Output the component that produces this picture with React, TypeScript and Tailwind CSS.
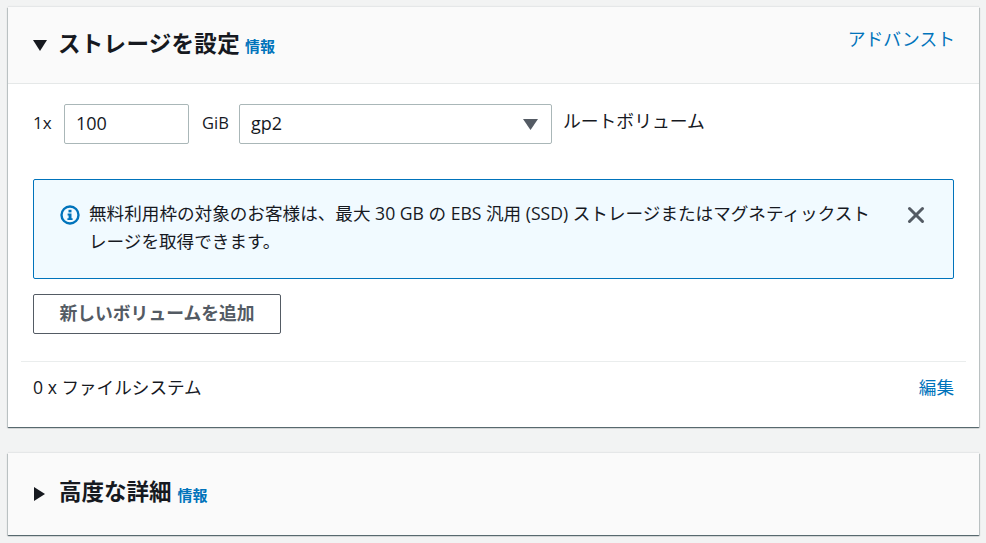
import { X } from "lucide-react"

const font = "font-['Open_Sans','Noto_Sans_CJK_JP',sans-serif]"

const App = () => {
  return (
    <div className={`h-[543px] w-[986px] overflow-hidden bg-[#f2f3f3] px-2 pt-[7px] text-[#16191f] ${font}`}>
      <section className="w-[971px] bg-white shadow-[0_1px_1px_0_rgba(0,28,36,0.5),1px_1px_1px_0_rgba(0,28,36,0.15),-1px_1px_1px_0_rgba(0,28,36,0.15),0_-1px_1px_0_rgba(0,28,36,0.05)]">
        <header className="flex h-[77px] justify-between border-b border-[#e5e8e8] bg-[#fafafa] pl-[25px] pr-6">
          <div className="flex items-center pb-[2px]">
            <svg width="14" height="11" viewBox="0 0 14 11" className="mr-[11px] mt-[2px]">
              <path d="M0 0h14L7 11z" fill="#16191f" />
            </svg>
            <h2 className="text-[22.5px] font-bold leading-none tracking-[0.3px]">ストレージを設定</h2>
            <a className="ml-[5px] mt-[5px] text-[15px] font-bold leading-none text-[#0073bb]">情報</a>
          </div>
          <a className="pt-5 text-[17.8px] leading-6 text-[#0073bb]">アドバンスト</a>
        </header>

        <div className="px-[25px] pt-5">
          <div className="flex h-10 items-center text-[18px]">
            <span className="w-[31px] -translate-y-px text-[17px]">1x</span>
            <div className="flex h-10 w-[125px] items-center rounded-[2px] border border-[#aab7b8] pb-[2px] pl-[11px]">100</div>
            <span className="ml-[13px] w-[37px] -translate-y-px text-[16.5px]">GiB</span>
            <div className="flex h-10 w-[313px] items-center justify-between rounded-[2px] border border-[#aab7b8] pb-[2px] pl-[11px] pr-[13px]">
              gp2
              <svg width="15" height="11" viewBox="0 0 15 11" className="mt-[2px]">
                <path d="M0 0h15L7.5 11z" fill="#545b64" />
              </svg>
            </div>
            <span className="ml-[11px] -translate-y-[3px] text-[17.8px]">ルートボリューム</span>
          </div>

          <div className="mt-[35px] flex h-[100px] w-[921px] items-start rounded-[2px] border border-[#0073bb] bg-[#f1faff] pl-[26px] pr-[27px] pt-[19px]">
            <svg width="20" height="20" viewBox="0 0 20 20" className="mt-[6px] shrink-0">
              <circle cx="10" cy="10" r="8.5" fill="none" stroke="#0073bb" strokeWidth="2.4" />
              <rect x="8.5" y="4.8" width="3" height="2.6" fill="#0073bb" />
              <path d="M7.6 8.6h3.9v4.6h1.1v1.8H7.4v-1.8h1.2v-2.8h-1z" fill="#0073bb" />
            </svg>
            <p className="ml-[9px] w-[790px] text-[17.6px] leading-[28px]">
              無料利用枠の対象のお客様は、最大 30 GB の EBS 汎用 (SSD) ストレージまたはマグネティックストレージを取得できます。
            </p>
            <X size={26} strokeWidth={2.8} className="ml-auto mr-[-3px] mt-[3px] shrink-0 text-[#545b64]" />
          </div>

          <button className="mt-[15px] flex h-10 w-[248px] items-center justify-center rounded-[2px] border border-[#545b64] pb-[2px] text-[17.8px] font-bold text-[#545b64]">
            新しいボリュームを追加
          </button>
        </div>

        <div className="mx-[13px] mt-[27px] flex h-[66px] items-start justify-between border-t border-[#eaeded] px-3 pt-[13px] text-[17.6px] leading-6">
          <span>0 x ファイルシステム</span>
          <a className="text-[#0073bb]">編集</a>
        </div>
      </section>

      <section className="mt-[26px] flex h-[82px] w-[971px] items-center bg-[#fafafa] pb-[4px] pl-[26px] shadow-[0_1px_1px_0_rgba(0,28,36,0.5),1px_1px_1px_0_rgba(0,28,36,0.15),-1px_1px_1px_0_rgba(0,28,36,0.15),0_-1px_1px_0_rgba(0,28,36,0.05)]">
        <svg width="11" height="14" viewBox="0 0 11 14" className="mr-[14px] mt-[4px]">
          <path d="M0 0v14l11-7z" fill="#16191f" />
        </svg>
        <h2 className="text-[22.5px] font-bold leading-none">高度な詳細</h2>
        <a className="ml-[6px] mt-[6px] text-[15px] font-bold leading-none text-[#0073bb]">情報</a>
      </section>
    </div>
  )
}

export default App
